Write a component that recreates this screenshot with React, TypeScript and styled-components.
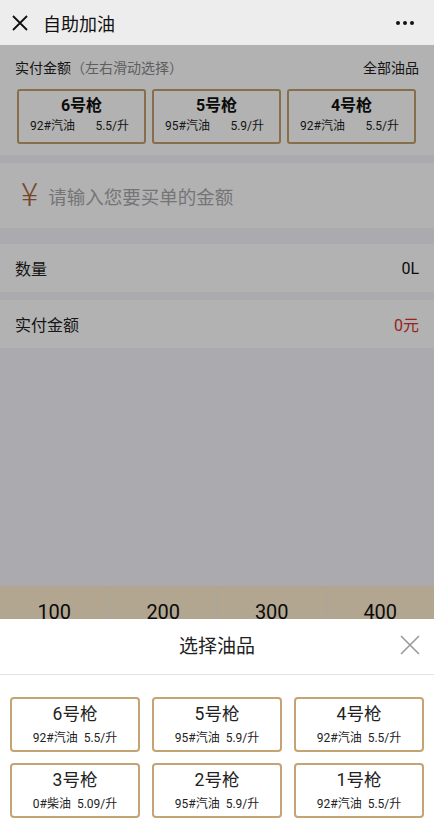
import React from "react";
import styled, { createGlobalStyle } from "styled-components";

const Global = createGlobalStyle`
  html, body { margin: 0; padding: 0; }
  body { font-family: Roboto, "Noto Sans CJK SC", sans-serif; color: #222; }
  * { box-sizing: border-box; }
`;

const Screen = styled.div`
  position: relative;
  width: 434px;
  height: 824px;
  overflow: hidden;
  background: #f5f4fa;
  display: flex;
  flex-direction: column;
`;

const NavBar = styled.div`
  height: 45px;
  flex: none;
  background: #ededed;
  display: flex;
  align-items: center;
  padding: 0 20px 0 12px;
`;

const NavTitle = styled.div`
  font-size: 18px;
  margin-left: 15px;
  flex: 1;
  color: #111;
`;

const Dots = styled.div`
  display: flex;
  gap: 3px;
  span {
    width: 4px;
    height: 4px;
    border-radius: 50%;
    background: #111;
  }
`;

const Body = styled.div`
  position: relative;
  flex: 1;
  display: flex;
  flex-direction: column;
`;

const GunSection = styled.div`
  background: #fff;
  padding: 12px 15px 11px 17px;
`;

const SectionHead = styled.div`
  display: flex;
  justify-content: space-between;
  align-items: center;
  font-size: 14px;
  height: 20px;
  margin-left: -2px;
  margin-bottom: 12px;
  color: #222;
  em { font-style: normal; color: #888; }
`;

const GunRow = styled.div`
  display: flex;
  gap: 6px;
`;

const GunCard = styled.div`
  width: 129px;
  height: 55px;
  border: 2px solid #c0a06a;
  border-radius: 3px;
  display: flex;
  flex-direction: column;
  align-items: stretch;
  justify-content: center;
`;

const GunTitle = styled.div`
  font-size: 16px;
  font-weight: 700;
  line-height: 18px;
  color: #111;
  text-align: center;
  margin-top: -2px;
`;

const GunSub = styled.div`
  display: flex;
  justify-content: space-between;
  padding: 0 15px 0 11px;
  font-size: 12px;
  line-height: 16px;
  margin-top: 3px;
  color: #222;
`;

const Gap = styled.div<{ $h: number }>`
  height: ${(p) => p.$h}px;
  flex: none;
`;

const AmountInput = styled.div`
  background: #fff;
  height: 65px;
  display: flex;
  align-items: center;
  padding-left: 21px;
`;

const Yen = styled.span`
  font-family: "Noto Sans CJK SC", sans-serif;
  font-size: 32px;
  font-weight: 300;
  color: #a8643a;
  margin-right: 10px;
  line-height: 1;
  margin-top: -8px;
`;

const Placeholder = styled.span`
  font-size: 18.5px;
  color: #a8a8ad;
`;

const InfoRow = styled.div`
  background: #fff;
  height: 48px;
  display: flex;
  align-items: center;
  justify-content: space-between;
  padding: 0 15px;
  font-size: 16px;
  color: #222;
`;

const Value = styled.span<{ $red?: boolean }>`
  color: ${(p) => (p.$red ? "#d9342b" : "#111")};
  font-size: 16px;
`;

const Keypad = styled.div`
  margin-top: auto;
  height: 238px;
  background: #ffeecf;
  display: grid;
  grid-template-columns: repeat(4, 1fr);
  grid-auto-rows: 52px;
`;

const Key = styled.div`
  display: flex;
  align-items: center;
  justify-content: center;
  font-size: 20px;
  color: #111;
  & + & { border-left: 1px solid #f0ece6; }
`;

const Overlay = styled.div`
  position: absolute;
  inset: 0;
  background: rgba(0, 0, 0, 0.3);
`;

const Sheet = styled.div`
  position: absolute;
  left: 0;
  right: 0;
  bottom: 0;
  height: 205px;
  background: #fff;
`;

const SheetHead = styled.div`
  position: relative;
  height: 56px;
  border-bottom: 1px solid #e2e2e2;
  display: flex;
  align-items: center;
  justify-content: center;
  font-size: 19px;
  color: #222;
  padding-bottom: 4px;
`;

const CloseBtn = styled.svg`
  position: absolute;
  right: 14px;
  top: 16px;
`;

const Grid = styled.div`
  display: grid;
  grid-template-columns: repeat(3, 1fr);
  column-gap: 12px;
  row-gap: 11px;
  padding: 22px 10px 0 10px;
`;

const PickCard = styled.div`
  height: 55px;
  border: 2px solid #c4a472;
  border-radius: 4px;
  display: flex;
  flex-direction: column;
  align-items: center;
  justify-content: center;
`;

const PickTitle = styled.div`
  font-size: 17.5px;
  line-height: 20px;
  color: #222;
`;

const PickSub = styled.div`
  font-size: 12px;
  line-height: 16px;
  margin-top: 6px;
  color: #222;
  display: flex;
  gap: 6px;
`;

const guns = [
  { n: "6号枪", t: "92#汽油", p: "5.5/升" },
  { n: "5号枪", t: "95#汽油", p: "5.9/升" },
  { n: "4号枪", t: "92#汽油", p: "5.5/升" },
  { n: "3号枪", t: "0#柴油", p: "5.09/升" },
  { n: "2号枪", t: "95#汽油", p: "5.9/升" },
  { n: "1号枪", t: "92#汽油", p: "5.5/升" },
];

export default function App() {
  return (
    <Screen>
      <Global />
      <NavBar>
        <svg width="16" height="16" viewBox="0 0 16 16">
          <path d="M1 1L15 15M15 1L1 15" stroke="#111" strokeWidth="1.8" />
        </svg>
        <NavTitle>自助加油</NavTitle>
        <Dots>
          <span />
          <span />
          <span />
        </Dots>
      </NavBar>
      <Body>
        <GunSection>
          <SectionHead>
            <span>
              实付金额<em>（左右滑动选择）</em>
            </span>
            <span>全部油品</span>
          </SectionHead>
          <GunRow>
            {guns.slice(0, 3).map((g) => (
              <GunCard key={g.n}>
                <GunTitle>{g.n}</GunTitle>
                <GunSub>
                  <span>{g.t}</span>
                  <span>{g.p}</span>
                </GunSub>
              </GunCard>
            ))}
          </GunRow>
        </GunSection>
        <Gap $h={8} />
        <AmountInput>
          <Yen>¥</Yen>
          <Placeholder>请输入您要买单的金额</Placeholder>
        </AmountInput>
        <Gap $h={16} />
        <InfoRow>
          <span>数量</span>
          <Value>0L</Value>
        </InfoRow>
        <Gap $h={8} />
        <InfoRow>
          <span>实付金额</span>
          <Value $red>0元</Value>
        </InfoRow>
        <Keypad>
          {["100", "200", "300", "400"].map((k) => (
            <Key key={k}>{k}</Key>
          ))}
        </Keypad>
        <Overlay />
      </Body>
      <Sheet>
        <SheetHead>
          选择油品
          <CloseBtn width="20" height="20" viewBox="0 0 20 20">
            <path d="M1 1L19 19M19 1L1 19" stroke="#999" strokeWidth="1.6" />
          </CloseBtn>
        </SheetHead>
        <Grid>
          {guns.map((g) => (
            <PickCard key={g.n}>
              <PickTitle>{g.n}</PickTitle>
              <PickSub>
                <span>{g.t}</span>
                <span>{g.p}</span>
              </PickSub>
            </PickCard>
          ))}
        </Grid>
      </Sheet>
    </Screen>
  );
}
